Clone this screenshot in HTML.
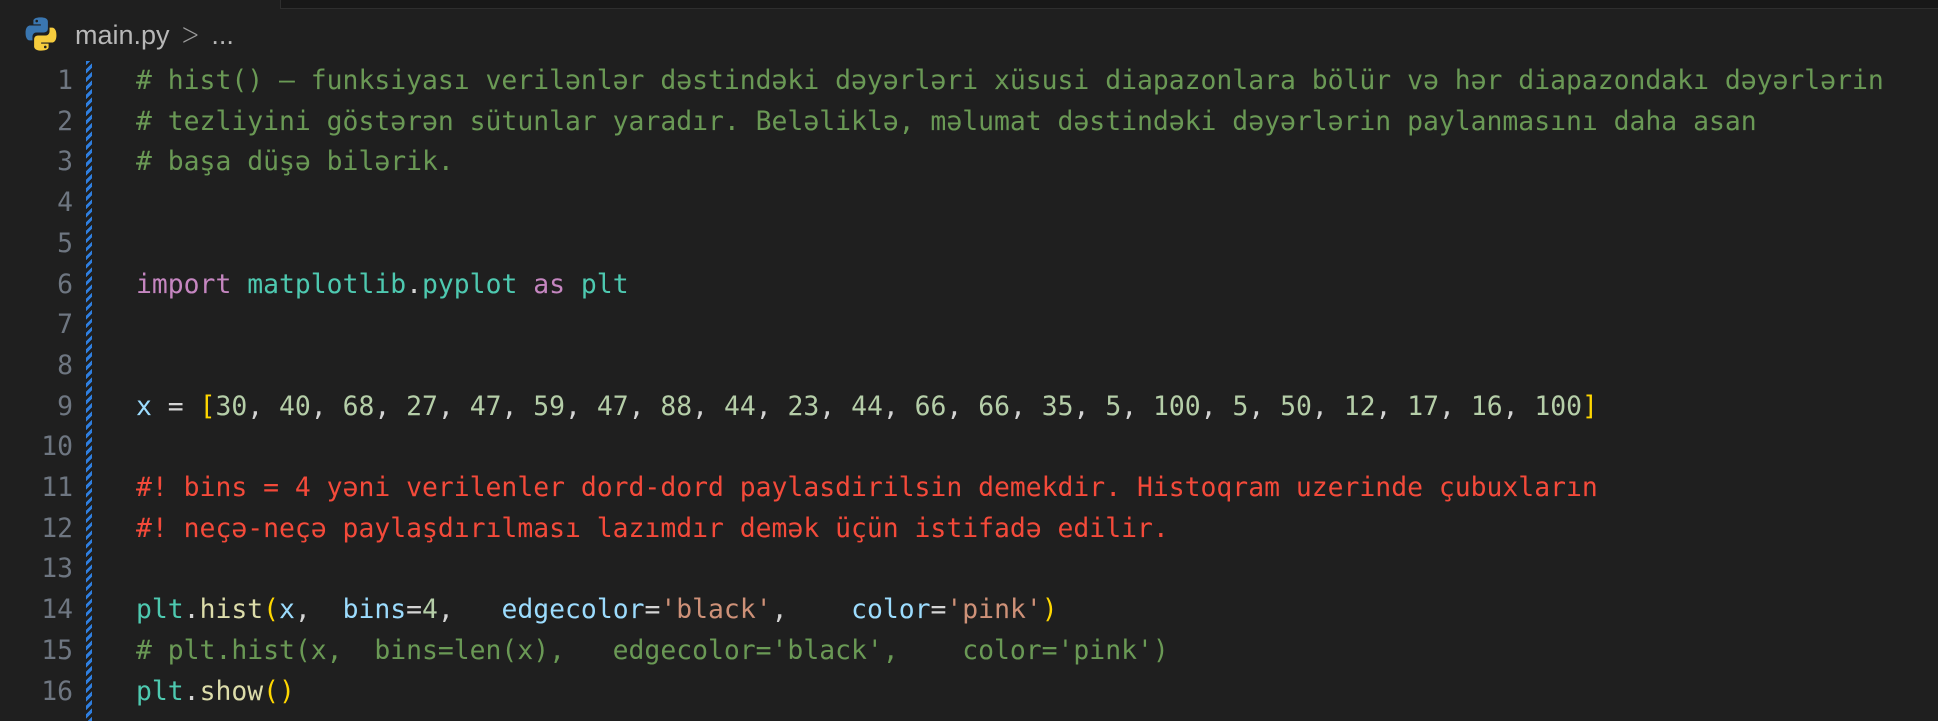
<!DOCTYPE html>
<html><head><meta charset="utf-8"><style>
html,body{margin:0;padding:0;background:#1f1f1f;width:1938px;height:710px;overflow:hidden}
.top{position:absolute;left:280px;top:-2px;width:1700px;height:9px;background:#181818;border:1px solid #2e2e2e}
.crumb{position:absolute;left:75px;top:14px;font-family:"Liberation Sans",sans-serif;font-size:27px;color:#b8b8b8;line-height:40px}
.chev{display:inline-block;font-family:"DejaVu Sans",sans-serif;font-weight:200;font-size:32px;color:#9a9a9a;transform:scaleX(0.7);vertical-align:-1px}
.icon{position:absolute;left:22px;top:15px}
.stripe{position:absolute;left:86px;top:61px;width:6px;height:660px;background:repeating-linear-gradient(135deg,#2f7fe0 0 3px,#1f1f1f 3px 6px)}
.ln{position:absolute;left:0;top:61px;width:73px;text-align:right;font-family:"DejaVu Sans Mono",monospace;font-size:26.4px;line-height:40.7px;color:#6e7681}
.code{position:absolute;left:136px;top:61px;font-family:"DejaVu Sans Mono",monospace;font-size:26.4px;line-height:40.7px;color:#d4d4d4;white-space:pre}
.c{color:#6a9955}.r{color:#f44a3a}.k{color:#c586c0}.m{color:#4ec9b0}.v{color:#9cdcfe}.n{color:#b5cea8}.s{color:#ce9178}.b{color:#ffd700}.f{color:#dcdcaa}
</style></head><body>
<div class="top"></div>
<svg class="icon" width="38" height="38" viewBox="0 0 32 32">
<path d="M15.8 2c-6.6 0-6.2 2.9-6.2 2.9v3h6.3v.9H7.1S3 8.3 3 15c0 6.6 3.6 6.4 3.6 6.4h2.2v-3.1s-.1-3.6 3.5-3.6h6.1s3.4.1 3.4-3.3V5.7S22.3 2 15.8 2zm-3.4 2a1.1 1.1 0 1 1 0 2.2 1.1 1.1 0 0 1 0-2.2z" fill="#3a76b0"/>
<path d="M16.2 30c6.6 0 6.2-2.9 6.2-2.9v-3h-6.3v-.9h8.8S29 23.7 29 17c0-6.6-3.6-6.4-3.6-6.4h-2.2v3.1s.1 3.6-3.5 3.6h-6.1s-3.4-.1-3.4 3.3v5.6S9.7 30 16.2 30zm3.4-2a1.1 1.1 0 1 1 0-2.2 1.1 1.1 0 0 1 0 2.2z" fill="#f6cc3d"/>
</svg>
<div class="crumb">main.py <span class="chev">&gt;</span> ...</div>
<div class="stripe"></div>
<div class="ln">1<br>2<br>3<br>4<br>5<br>6<br>7<br>8<br>9<br>10<br>11<br>12<br>13<br>14<br>15<br>16</div>
<div class="code"><span class="c"># hist() – funksiyası verilənlər dəstindəki dəyərləri xüsusi diapazonlara bölür və hər diapazondakı dəyərlərin</span>
<span class="c"># tezliyini göstərən sütunlar yaradır. Beləliklə, məlumat dəstindəki dəyərlərin paylanmasını daha asan</span>
<span class="c"># başa düşə bilərik.</span>


<span class="k">import</span> <span class="m">matplotlib</span>.<span class="m">pyplot</span> <span class="k">as</span> <span class="m">plt</span>


<span class="v">x</span> = <span class="b">[</span><span class="n">30</span>, <span class="n">40</span>, <span class="n">68</span>, <span class="n">27</span>, <span class="n">47</span>, <span class="n">59</span>, <span class="n">47</span>, <span class="n">88</span>, <span class="n">44</span>, <span class="n">23</span>, <span class="n">44</span>, <span class="n">66</span>, <span class="n">66</span>, <span class="n">35</span>, <span class="n">5</span>, <span class="n">100</span>, <span class="n">5</span>, <span class="n">50</span>, <span class="n">12</span>, <span class="n">17</span>, <span class="n">16</span>, <span class="n">100</span><span class="b">]</span>

<span class="r">#! bins = 4 yəni verilenler dord-dord paylasdirilsin demekdir. Histoqram uzerinde çubuxların</span>
<span class="r">#! neçə-neçə paylaşdırılması lazımdır demək üçün istifadə edilir.</span>

<span class="m">plt</span>.<span class="f">hist</span><span class="b">(</span><span class="v">x</span>,  <span class="v">bins</span>=<span class="n">4</span>,   <span class="v">edgecolor</span>=<span class="s">'black'</span>,    <span class="v">color</span>=<span class="s">'pink'</span><span class="b">)</span>
<span class="c"># plt.hist(x,  bins=len(x),   edgecolor='black',    color='pink')</span>
<span class="m">plt</span>.<span class="f">show</span><span class="b">()</span></div>
</body></html>
